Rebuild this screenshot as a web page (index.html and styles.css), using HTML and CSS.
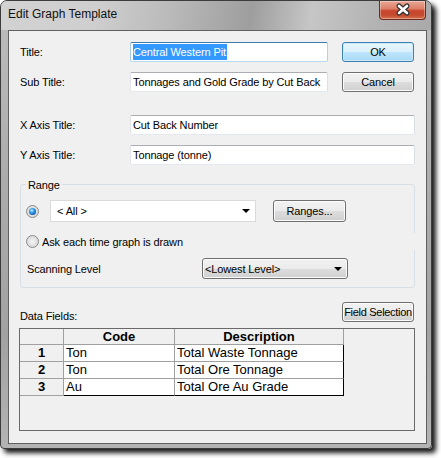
FILE: index.html
```html
<!DOCTYPE html>
<html>
<head>
<meta charset="utf-8">
<title>Edit Graph Template</title>
<link rel="stylesheet" href="styles.css">
</head>
<body>
<div class="screen">
  <div class="window">
    <div class="titlebar">
      <span class="title">Edit Graph Template</span>
      <div class="close">
        <svg width="45" height="19" viewBox="0 0 45 19">
          <path d="M19 5 L27 12 M27 5 L19 12" stroke="#2e2e2e" stroke-width="5" stroke-linecap="round" fill="none"/>
          <path d="M19 5 L27 12 M27 5 L19 12" stroke="#ffffff" stroke-width="2.6" stroke-linecap="round" fill="none"/>
        </svg>
      </div>
    </div>
    <div class="client">
      <div class="row">
        <span class="label">Title:</span>
        <div class="input focus short"><span class="sel">Central Western Pit</span></div>
        <div class="btn default side">OK</div>
      </div>
      <div class="row gap10">
        <span class="label">Sub Title:</span>
        <div class="input short">Tonnages and Gold Grade by Cut Back</div>
        <div class="btn side">Cancel</div>
      </div>
      <div class="row gap23">
        <span class="label">X Axis Title:</span>
        <div class="input long">Cut Back Number</div>
      </div>
      <div class="row gap10">
        <span class="label">Y Axis Title:</span>
        <div class="input long">Tonnage (tonne)</div>
      </div>

      <div class="group">
        <span class="legend">Range</span>
        <div class="grow range-row">
          <span class="radio on"></span>
          <div class="combo edit"><span>&lt; All &gt;</span><span class="arrow"></span></div>
          <div class="btn ranges">Ranges...</div>
        </div>
        <div class="grow ask-row">
          <span class="radio"></span>
          <span class="ask">Ask each time graph is drawn</span>
        </div>
        <div class="grow scan-row">
          <span class="scan-label">Scanning Level</span>
          <div class="combo list"><span>&lt;Lowest Level&gt;</span><span class="arrow"></span></div>
        </div>
      </div>

      <div class="data-row">
        <span class="data-label">Data Fields:</span>
        <div class="btn field">Field Selection</div>
      </div>

      <div class="grid">
        <div class="table">
          <div class="cell head"></div>
          <div class="cell head">Code</div>
          <div class="cell head">Description</div>

          <div class="cell rowhead">1</div>
          <div class="cell data">Ton</div>
          <div class="cell data lastcol">Total Waste Tonnage</div>

          <div class="cell rowhead">2</div>
          <div class="cell data">Ton</div>
          <div class="cell data lastcol">Total Ore Tonnage</div>

          <div class="cell rowhead">3</div>
          <div class="cell data lastrow">Au</div>
          <div class="cell data lastrow lastcol">Total Ore Au Grade</div>
        </div>
      </div>
    </div>
  </div>
</div>
</body>
</html>
```
FILE: styles.css
```css
* { box-sizing: border-box; }

body {
  margin: 0;
  background: #ffffff;
  font-family: "Liberation Sans", Arial, sans-serif;
  font-size: 11px;
  letter-spacing: -0.12px;
  color: #000;
}

.screen {
  width: 441px;
  height: 458px;
}

.window {
  width: 432px;
  height: 449px;
  border: 1px solid #3c3c3c;
  border-radius: 7px 7px 4px 4px;
  background: linear-gradient(180deg, #bdbdbd 0%, #acacac 40%, #a2a2a2 75%, #b4b4b4 100%);
  box-shadow: 4px 4px 5px rgba(0, 0, 0, 0.9);
  display: flex;
  flex-direction: column;
}

.titlebar {
  height: 29px;
  display: flex;
  align-items: flex-start;
  border-radius: 6px 6px 0 0;
  background: linear-gradient(100deg, #d2d2d2 0%, #cfcfcf 22%, #b9b9b9 40%, #9e9e9e 58%, #c6c6c6 72%, #b4b4b4 86%, #a9a9a9 100%);
}

.title {
  margin: 5px 0 0 7px;
  font-family: "Liberation Sans", Arial, sans-serif;
  font-size: 12px;
  letter-spacing: 0;
  line-height: 16px;
  color: #111;
}

.close {
  margin-left: auto;
  margin-right: 5px;
  width: 47px;
  height: 19px;
  border: 1px solid #6a2a1e;
  border-top: none;
  border-radius: 0 0 4px 4px;
  background: linear-gradient(180deg, #eaa896 0%, #dc8068 42%, #c9452b 55%, #c44a2f 78%, #d8704f 100%);
  box-shadow: inset 0 0 0 1px rgba(255, 255, 255, 0.35);
}

.close svg { display: block; }

.client {
  flex: 1;
  margin: 0 4px 4px 7px;
  border: 1px solid #606060;
  background: #f0f0f0;
  padding: 11px 11px 0;
  display: flex;
  flex-direction: column;
}

.row {
  display: flex;
  align-items: center;
  height: 20px;
}

.gap10 { margin-top: 10px; }
.gap23 { margin-top: 23px; }

.label {
  width: 110px;
  flex: none;
}

.input {
  height: 20px;
  background: #fff;
  border: 1px solid;
  border-color: #abadb3 #dbdfe6 #e3e9ef #e2e3ea;
  border-radius: 2px;
  padding: 0 2px;
  display: flex;
  align-items: center;
  white-space: nowrap;
  overflow: hidden;
}

.input.focus {
  border-color: #3d7bad #b5cfe7 #b7d9ed #a4c9e3;
}

.short { width: 198px; }
.long { width: 285px; }

.sel {
  background: #3399ff;
  color: #fff;
  line-height: 16px;
  padding: 0 1px 0 0;
}

.btn {
  height: 20px;
  border: 1px solid #707070;
  border-radius: 3px;
  background: linear-gradient(180deg, #f2f2f2 0%, #ebebeb 50%, #dddddd 51%, #cfcfcf 100%);
  box-shadow: inset 0 0 0 1px #fbfbfb;
  display: flex;
  align-items: center;
  justify-content: center;
  white-space: nowrap;
}

.btn.default {
  border-color: #3c7fb1;
  background: linear-gradient(180deg, #eaf6fd 0%, #d9f0fc 50%, #bee6fd 51%, #a7d9f5 100%);
  box-shadow: inset 0 0 0 1px #cdeafb;
}

.side {
  width: 72px;
  margin-left: 14px;
}

.group {
  margin-top: 19px;
  border: 1px solid #d5dfe5;
  border-radius: 3px;
  padding-bottom: 8px;
  display: flex;
  flex-direction: column;
}

.legend {
  align-self: flex-start;
  margin: -6px 0 0 5px;
  padding: 0 2px;
  height: 13px;
  line-height: 13px;
  background: #f0f0f0;
}

.grow {
  display: flex;
  align-items: center;
}

.range-row {
  margin-top: 8px;
  height: 22px;
}

.radio {
  flex: none;
  width: 13px;
  height: 13px;
  margin-left: 5px;
  border-radius: 50%;
  border: 1px solid #8a8a8a;
  background: radial-gradient(circle at 50% 50%, #f6f6f6 0%, #dcdcdc 65%, #eeeeee 100%);
  display: flex;
  align-items: center;
  justify-content: center;
}

.radio.on::after {
  content: "";
  width: 7px;
  height: 7px;
  border-radius: 50%;
  background: radial-gradient(circle at 40% 35%, #b8ecff 0%, #2f98e6 40%, #1159a6 75%, #0a3164 100%);
}

.combo {
  display: flex;
  align-items: center;
  white-space: nowrap;
}

.combo.edit {
  width: 206px;
  height: 22px;
  margin-left: 11px;
  background: #fff;
  border: 1px solid #dadada;
  padding-left: 6px;
}

.arrow {
  margin-left: auto;
  width: 0;
  height: 0;
  border-left: 4px solid transparent;
  border-right: 4px solid transparent;
  border-top: 4px solid #000;
}

.combo.edit .arrow { margin-right: 5px; }

.btn.ranges {
  width: 73px;
  height: 22px;
  margin-left: 17px;
}

.ask-row {
  margin-top: 11px;
  height: 17px;
  margin-right: -1px;
  background: #f0f0f0;
}

.ask {
  margin-left: 3px;
}

.scan-row {
  margin-top: 8px;
  height: 21px;
}

.scan-label {
  width: 181px;
  padding-left: 6px;
  flex: none;
}

.combo.list {
  width: 146px;
  height: 21px;
  border: 1px solid #707070;
  border-radius: 3px;
  background: linear-gradient(180deg, #f2f2f2 0%, #ebebeb 50%, #dddddd 51%, #cfcfcf 100%);
  box-shadow: inset 0 0 0 1px #fbfbfb;
  padding-left: 2px;
}

.combo.list .arrow { margin-right: 5px; }

.data-row {
  margin-top: 14px;
  height: 20px;
  display: flex;
  align-items: flex-end;
}

.data-label {
  line-height: 13px;
  margin-bottom: -1px;
}

.btn.field {
  margin-left: auto;
  margin-right: 1px;
  width: 72px;
  align-self: stretch;
  letter-spacing: -0.3px;
}

.grid {
  margin: 6px 0 0 -1px;
  width: 396px;
  height: 103px;
  border: 1px solid #6a6a6a;
  background: #f0f0f0;
}

.table {
  display: grid;
  grid-template-columns: 44px 111px 169px;
  grid-template-rows: 16px repeat(3, 17px);
  font-family: "Liberation Sans", Arial, sans-serif;
  font-size: 13px;
  letter-spacing: 0;
}

.cell {
  border-right: 1px solid #a0a0a0;
  border-bottom: 1px solid #a0a0a0;
  line-height: 16px;
  white-space: nowrap;
  overflow: hidden;
}

.head, .rowhead {
  background: #f0f0f0;
  font-weight: bold;
  text-align: center;
}

.head { line-height: 15px; }

.data {
  background: #fff;
  padding-left: 2px;
  border-right-color: #a0a0a0;
}

.lastcol { border-right-color: #000; }
.lastrow { border-bottom-color: #000; }
```
